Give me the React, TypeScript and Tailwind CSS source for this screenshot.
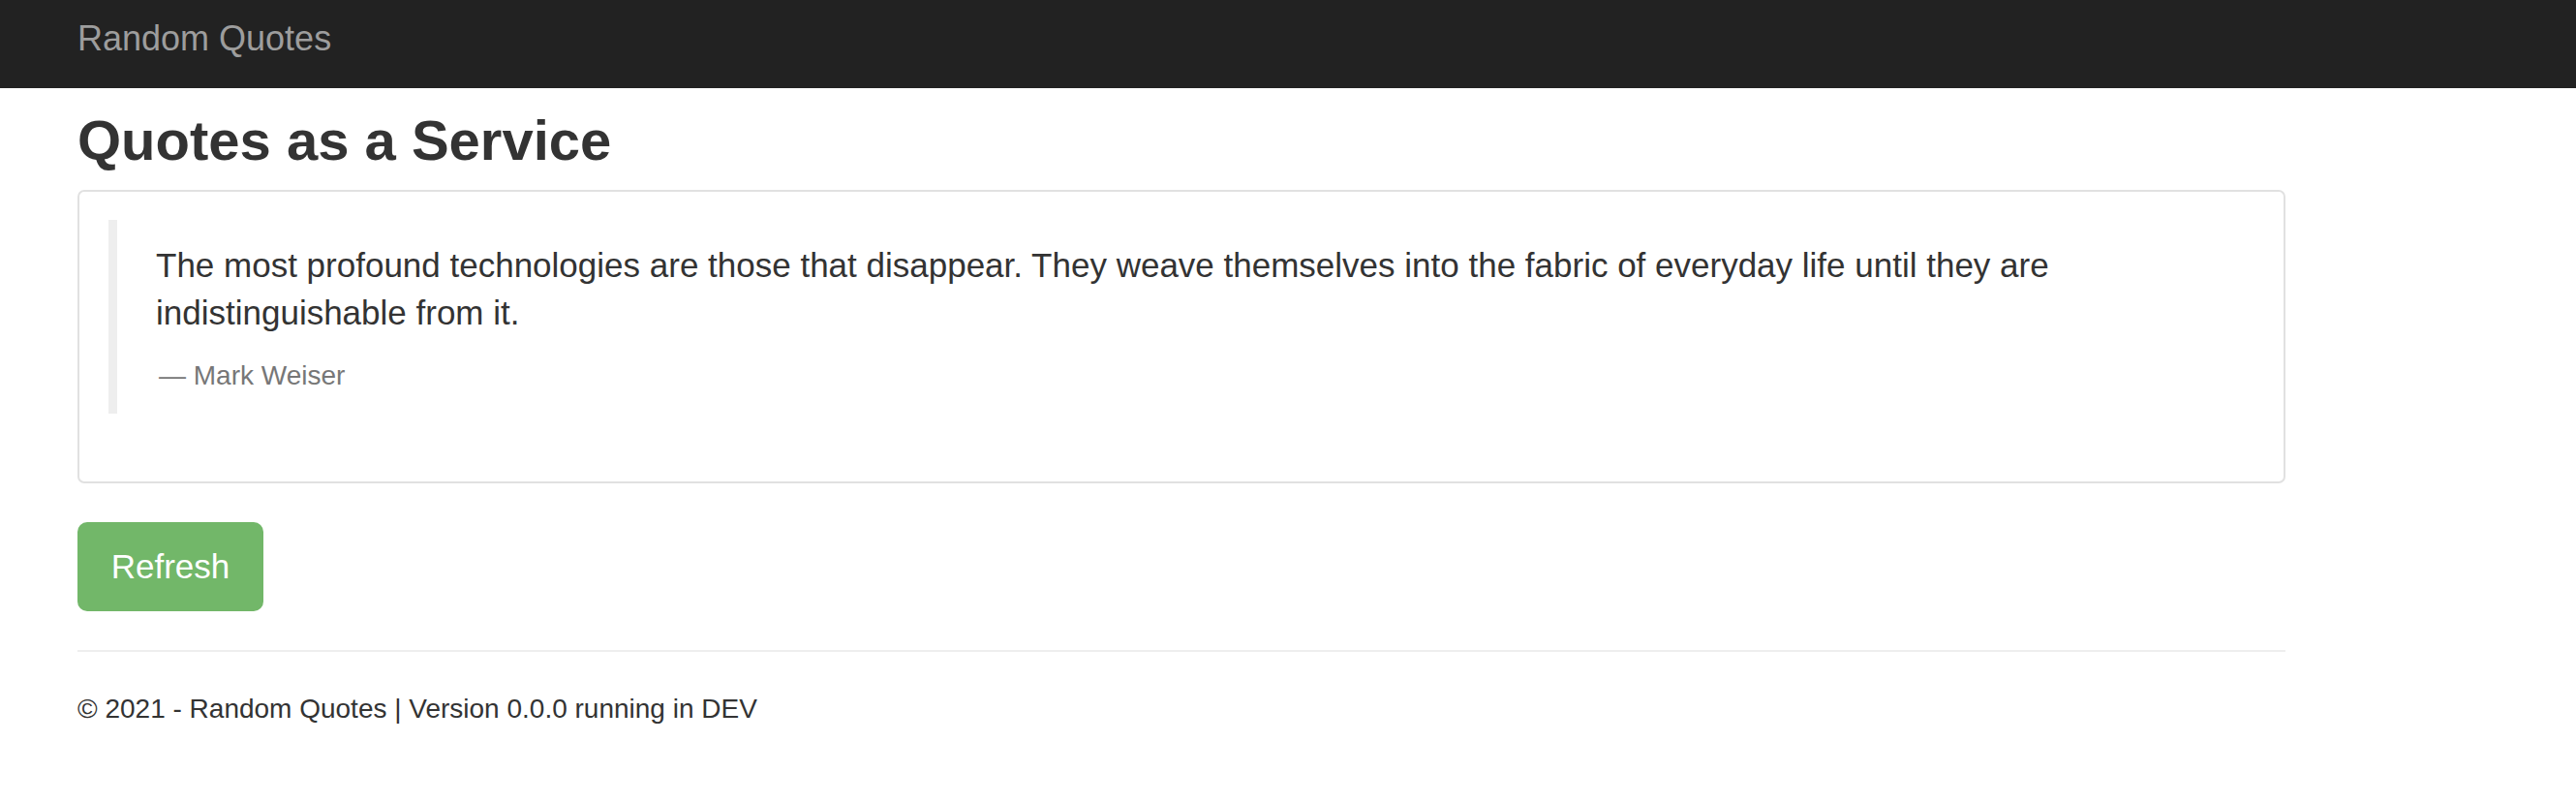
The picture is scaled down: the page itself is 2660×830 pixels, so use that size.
export default function App() {
  return (
    <div className="min-h-[830px] bg-white font-['Liberation_Sans',Helvetica,Arial,sans-serif] text-[#333]">
      <nav className="h-[91px] bg-[#222] pl-[80px] pt-[22px]">
        <a className="block text-[36px] leading-[35px] text-[#9d9d9d]">Random Quotes</a>
      </nav>
      <main className="w-[2360px] pl-[80px]">
        <h1 className="mt-[20px] text-[58px] leading-[67px] font-bold text-[#333]">Quotes as a Service</h1>
        <div className="mt-[18px] h-[303px] rounded-[7px] border-2 border-[#e1e1e1] pt-[29px] pl-[30px] pr-[30px] pb-[70px]">
          <blockquote className="h-[200px] border-l-[9px] border-[#eeeeee] pl-[40px] pr-[34px] pt-[22px] pb-[20px]">
            <p className="mb-[21px] text-[35px] leading-[49px] text-[#333]">
              The most profound technologies are those that disappear. They weave themselves into the fabric of everyday life until they are indistinguishable from it.
            </p>
            <footer className="pl-[3px] text-[28px] leading-[39px] text-[#777]">{"\u2014\u00a0"}Mark Weiser</footer>
          </blockquote>
        </div>
        <button className="mt-[40px] h-[92px] w-[192px] rounded-[10px] bg-[#72b769] text-center text-[35px] leading-[92px] text-white">
          Refresh
        </button>
        <hr className="mt-[40px] border-0 border-t-2 border-[#eeeeee]" />
        <footer className="mt-[39px] text-[28px] leading-[40px] text-[#333]">
          © 2021 - Random Quotes | Version 0.0.0 running in DEV
        </footer>
      </main>
    </div>
  );
}
